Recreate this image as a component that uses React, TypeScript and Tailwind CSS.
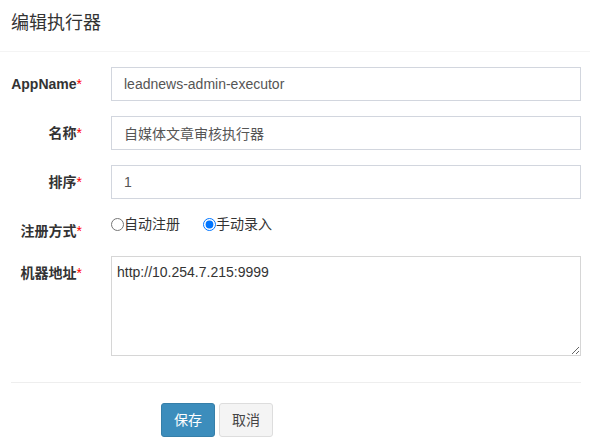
const FONT = '"Liberation Sans", "Noto Sans CJK SC", sans-serif';

function Label({ text }: { text: string }) {
  return (
    <label className="w-[82px] shrink-0 pt-[7px] text-right text-[14px] font-bold leading-[20px] text-[#333]">
      {text}
      <span className="text-[#ff0000] font-normal">*</span>
    </label>
  );
}

function TextRow({ label, value }: { label: string; value: string }) {
  return (
    <div className="flex mb-[15px]">
      <Label text={label} />
      <input
        readOnly
        value={value}
        className="ml-[29px] h-[34px] w-[470px] border border-[#d2d6de] bg-white px-[12px] text-[14px] text-[#555] outline-none"
      />
    </div>
  );
}

export default function App() {
  return (
    <div className="w-[590px] h-[444px] bg-white overflow-hidden" style={{ fontFamily: FONT }}>
      <div className="h-[52px] border-b border-[#f4f4f4] pl-[11px] pt-[11px]">
        <h4 className="text-[18px] leading-[24px] text-[#333]">编辑执行器</h4>
      </div>
      <form className="pt-[15px]">
        <TextRow label="AppName" value="leadnews-admin-executor" />
        <TextRow label="名称" value="自媒体文章审核执行器" />
        <TextRow label="排序" value="1" />
        <div className="flex mb-[15px]">
          <Label text="注册方式" />
          <div className="ml-[29px] flex h-[20px] items-center text-[14px] text-[#333]">
            <label className="flex items-center">
              <input type="radio" name="addressType" className="m-0 h-[13px] w-[13px]" />
              <span>自动注册</span>
            </label>
            <label className="ml-[23px] flex items-center">
              <input type="radio" name="addressType" defaultChecked className="m-0 h-[13px] w-[13px]" />
              <span>手动录入</span>
            </label>
          </div>
        </div>
        <div className="flex">
          <Label text="机器地址" />
          <textarea
            readOnly
            value="http://10.254.7.215:9999"
            className="ml-[29px] h-[100px] w-[470px] border border-[#d6d6d6] bg-white px-[5px] py-[5px] text-[14px] leading-[20px] text-[#333] outline-none"
          />
        </div>
        <hr className="ml-[11px] mt-[26px] w-[570px] border-t border-[#eee]" />
        <div className="flex gap-[4px] pl-[161px] pt-[20px]">
          <button
            type="button"
            className="h-[34px] w-[54px] rounded-[3px] border border-[#367fa9] bg-[#3c8dbc] text-[14px] text-white"
          >
            保存
          </button>
          <button
            type="button"
            className="h-[34px] w-[54px] rounded-[3px] border border-[#ddd] bg-[#f4f4f4] text-[14px] text-[#444]"
          >
            取消
          </button>
        </div>
      </form>
    </div>
  );
}
